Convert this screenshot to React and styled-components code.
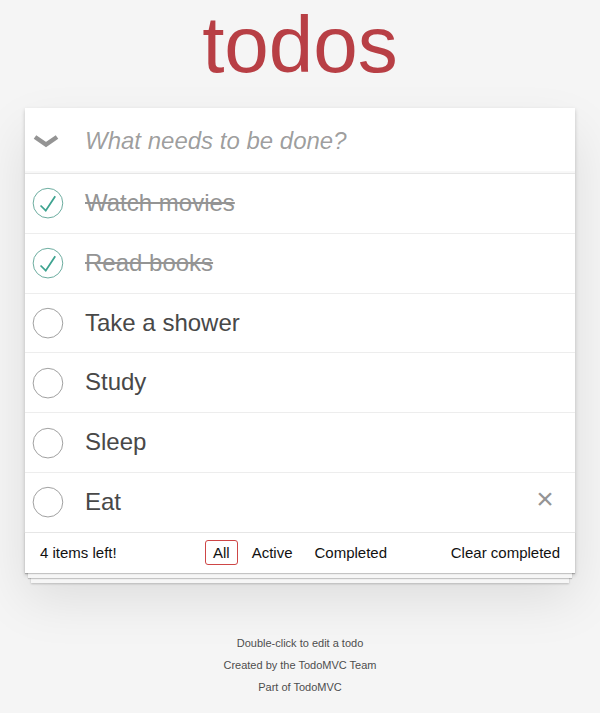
import React from "react";
import styled, { createGlobalStyle } from "styled-components";

const todos = [
  { id: 1, title: "Watch movies", completed: true },
  { id: 2, title: "Read books", completed: true },
  { id: 3, title: "Take a shower", completed: false },
  { id: 4, title: "Study", completed: false },
  { id: 5, title: "Sleep", completed: false },
  { id: 6, title: "Eat", completed: false, hovered: true },
];

const filters = ["All", "Active", "Completed"];

const ToggleIcon = ({ checked }) => (
  <svg width="40" height="40" viewBox="-10 -18 100 135">
    <circle
      cx="50"
      cy="50"
      r="50"
      fill="none"
      stroke={checked ? "#59A193" : "#949494"}
      strokeWidth="3"
    />
    {checked && <path fill="#3EA390" d="M72 25L42 71 27 56l-4 4 20 20 34-52z" />}
  </svg>
);

const Chevron = () => (
  <svg width="26" height="16" viewBox="0 0 26 16">
    <path d="M2 4 L13 11.5 L24 4" fill="none" stroke="#949494" strokeWidth="4.5" />
  </svg>
);

export default function App() {
  const left = todos.filter((t) => !t.completed).length;

  return (
    <>
      <GlobalStyle />
      <Page>
        <Title>todos</Title>
        <Card>
          <Header>
            <ToggleAll>
              <Chevron />
            </ToggleAll>
            <NewTodo placeholder="What needs to be done?" />
          </Header>

          <List>
            {todos.map((todo) => (
              <Item key={todo.id}>
                <Toggle>
                  <ToggleIcon checked={todo.completed} />
                </Toggle>
                <Label $completed={todo.completed}>{todo.title}</Label>
                {todo.hovered && <Destroy>×</Destroy>}
              </Item>
            ))}
          </List>

          <Footer>
            <Count>{left} items left!</Count>
            <Filters>
              {filters.map((f) => (
                <FilterLink key={f} $selected={f === "All"}>
                  {f}
                </FilterLink>
              ))}
            </Filters>
            <ClearCompleted>Clear completed</ClearCompleted>
          </Footer>
        </Card>

        <Info>
          <p>Double-click to edit a todo</p>
          <p>Created by the TodoMVC Team</p>
          <p>Part of TodoMVC</p>
        </Info>
      </Page>
    </>
  );
}

const GlobalStyle = createGlobalStyle`
  html, body {
    margin: 0;
    padding: 0;
  }

  body {
    background: #f5f5f5;
    color: #111111;
    font-family: "Liberation Sans", Arial, sans-serif;
    font-size: 14px;
    line-height: 1.4em;
  }
`;

const Page = styled.div`
  max-width: 550px;
  margin: 0 auto;
`;

const Title = styled.h1`
  margin: 0 0 18px;
  font-size: 80px;
  line-height: 90px;
  font-weight: 200;
  text-align: center;
  color: #b83f45;
`;

const Card = styled.section`
  background: #fff;
  box-shadow: 0 2px 4px 0 rgba(0, 0, 0, 0.2), 0 25px 50px 0 rgba(0, 0, 0, 0.1);
`;

const Header = styled.header`
  display: flex;
  align-items: center;
  height: 65px;
  box-shadow: inset 0 -2px 1px rgba(0, 0, 0, 0.03);
`;

const ToggleAll = styled.div`
  width: 42px;
  height: 65px;
  display: flex;
  align-items: center;
  justify-content: center;
  flex-shrink: 0;
  margin-right: 18px;

  svg {
    display: block;
  }
`;

const NewTodo = styled.input`
  flex: 1;
  min-width: 0;
  height: 65px;
  box-sizing: border-box;
  padding: 16px 16px 16px 0;
  border: none;
  outline: none;
  background: transparent;
  font-family: inherit;
  font-size: 24px;
  line-height: 1.4em;
  color: #484848;

  &::placeholder {
    font-style: italic;
    color: rgba(0, 0, 0, 0.4);
  }
`;

const List = styled.ul`
  margin: 0;
  padding: 0;
  list-style: none;
  border-top: 1px solid #e6e6e6;
`;

const Item = styled.li`
  display: flex;
  align-items: center;
  font-size: 24px;
  border-bottom: 1px solid #ededed;

  &:last-child {
    border-bottom: none;
  }
`;

const Toggle = styled.div`
  width: 60px;
  height: 40px;
  flex-shrink: 0;

  svg {
    display: block;
  }
`;

const Label = styled.label`
  flex: 1;
  padding: 15px 15px 15px 0;
  line-height: 1.2;
  font-weight: 400;
  color: ${(p) => (p.$completed ? "#949494" : "#484848")};
  text-decoration: ${(p) => (p.$completed ? "line-through" : "none")};
`;

const Destroy = styled.button`
  width: 40px;
  height: 40px;
  margin-right: 10px;
  padding: 0;
  border: none;
  background: none;
  font-family: inherit;
  font-size: 30px;
  line-height: 1.1;
  color: #949494;
  display: flex;
  justify-content: center;
  align-items: flex-start;
`;

const Footer = styled.footer`
  display: grid;
  grid-template-columns: 1fr auto 1fr;
  align-items: center;
  height: 20px;
  padding: 10px 15px;
  font-size: 15px;
  border-top: 1px solid #e6e6e6;
  box-shadow: 0 1px 1px rgba(0, 0, 0, 0.2), 0 8px 0 -3px #f6f6f6,
    0 9px 1px -3px rgba(0, 0, 0, 0.2), 0 16px 0 -6px #f6f6f6,
    0 17px 2px -6px rgba(0, 0, 0, 0.2);
`;

const Count = styled.span`
  justify-self: start;
`;

const Filters = styled.div`
  white-space: nowrap;
`;

const FilterLink = styled.a`
  margin: 3px;
  padding: 3px 7px;
  border: 1px solid ${(p) => (p.$selected ? "#ce4646" : "transparent")};
  border-radius: 3px;
  color: inherit;
  text-decoration: none;
`;

const ClearCompleted = styled.span`
  justify-self: end;
  line-height: 19px;
`;

const Info = styled.footer`
  margin: 65px auto 0;
  color: #4d4d4d;
  font-size: 11px;
  text-shadow: 0 1px 0 rgba(255, 255, 255, 0.5);
  text-align: center;

  p {
    line-height: 1;
    margin: 11px 0;
  }
`;
